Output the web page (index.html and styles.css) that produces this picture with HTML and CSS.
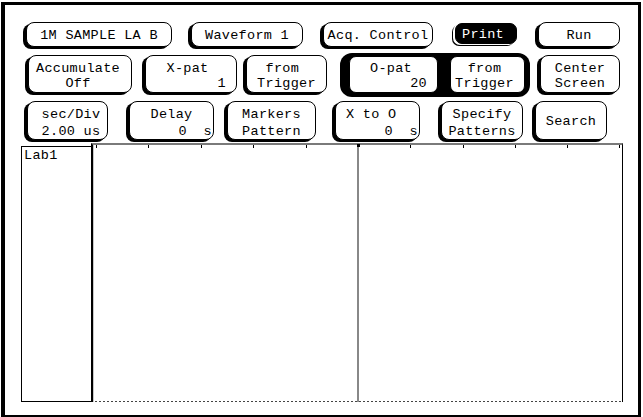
FILE: index.html
```html
<!DOCTYPE html>
<html>
<head>
<meta charset="utf-8">
<link rel="stylesheet" href="styles.css">
</head>
<body>
<div class="frame">
  <div class="row row1">
    <div class="btn b-sample"><span class="ln">1M SAMPLE LA B</span></div>
    <div class="btn b-wave"><span class="ln">Waveform 1</span></div>
    <div class="btn b-acq"><span class="ln">Acq. Control</span></div>
    <div class="btn b-print"><span class="ln">Print</span></div>
    <div class="btn b-run"><span class="ln">Run</span></div>
  </div>
  <div class="row row2">
    <div class="btn b-accum"><span class="ln">Accumulate</span><span class="ln">Off</span></div>
    <div class="btn b-xpat"><span class="ln">X-pat</span><span class="ln val val-x">1</span></div>
    <div class="btn b-from1"><span class="ln">from </span><span class="ln">Trigger</span></div>
    <div class="grp">
      <div class="btn b-opat"><span class="ln">O-pat</span><span class="ln val val-o">20</span></div>
      <div class="btn b-from2"><span class="ln">from</span><span class="ln">Trigger</span></div>
    </div>
    <div class="btn b-center"><span class="ln">Center</span><span class="ln">Screen</span></div>
  </div>
  <div class="row row3">
    <div class="btn b-sec"><span class="ln">sec/Div</span><span class="ln">2.00 us</span></div>
    <div class="btn b-delay"><span class="ln">Delay</span><span class="ln val val-s">0  s</span></div>
    <div class="btn b-markers"><span class="ln">Markers</span><span class="ln">Pattern</span></div>
    <div class="btn b-xo"><span class="ln left">X to O</span><span class="ln val val-s">0  s</span></div>
    <div class="btn b-specify"><span class="ln">Specify</span><span class="ln">Patterns</span></div>
    <div class="btn b-search"><span class="ln">Search</span></div>
  </div>
  <div class="graph">
    <div class="lab">Lab1</div>
    <div class="wave">
      <svg class="ticks" width="529" height="3" viewBox="0 0 529 3">
        <g stroke="#000" stroke-width="1">
          <line x1="3.5" y1="0" x2="3.5" y2="3"/>
          <line x1="55.5" y1="0" x2="55.5" y2="3"/>
          <line x1="108.5" y1="0" x2="108.5" y2="3"/>
          <line x1="160.5" y1="0" x2="160.5" y2="3"/>
          <line x1="213.5" y1="0" x2="213.5" y2="3"/>
          <line x1="317.5" y1="0" x2="317.5" y2="3"/>
          <line x1="370.5" y1="0" x2="370.5" y2="3"/>
          <line x1="422.5" y1="0" x2="422.5" y2="3"/>
          <line x1="474.5" y1="0" x2="474.5" y2="3"/>
          <line x1="526.5" y1="0" x2="526.5" y2="3"/>
        </g>
      </svg>
      <div class="marker"></div>
      <div class="dots"></div>
    </div>
  </div>
</div>
</body>
</html>
```
FILE: styles.css
```css
* { box-sizing: border-box; }
html, body { margin: 0; background: #fff; }
body {
  font-family: "Liberation Mono", "DejaVu Sans Mono", monospace;
  font-size: 13.5px;
  letter-spacing: 0.3px;
  color: #000;
}
.frame {
  margin: 2px 0 0 1px;
  width: 640px;
  height: 415px;
  border-style: solid;
  border-color: #000;
  border-width: 3px 3px 2px 4px;
}
.row { display: flex; align-items: flex-start; }
.btn {
  flex: none;
  display: flex;
  flex-direction: column;
  background: #fff;
  border: 1px solid #000;
  border-radius: 8px;
  box-shadow: -3px 2px 0 0 #000;
  line-height: 15px;
}
.ln { display: block; text-align: center; white-space: pre; }
.ln.left { text-align: left; }
.ln.val { text-align: right; }

/* row 1 */
.row1 { margin-top: 17px; height: 25px; }
.row1 .btn { height: 25px; padding-top: 5px; }
.b-sample { margin-left: 21px; width: 146px; }
.b-wave { margin-left: 19px; width: 112px; }
.b-acq { margin-left: 20px; width: 110px; }
.row1 .b-print {
  margin-left: 22px; margin-top: 1px; width: 62px; height: 21px;
  padding-top: 3px; padding-right: 6px;
  background: #000; color: #fff; border-radius: 7px;
  box-shadow: -2px 1px 0 0 #fff, -3px 2px 0 0 #000;
}
.b-run { margin-left: 21px; width: 82px; }

/* row 2 */
.row2 { margin-top: 6px; height: 44px; }
.row2 > .btn { margin-top: 2px; height: 38px; padding-top: 5px; }
.b-accum { margin-left: 23px; width: 104px; padding-right: 4px; }
.b-xpat { margin-left: 13px; width: 92px; padding-right: 7px; }
.val-x { padding-right: 3px; }
.b-from1 { margin-left: 9px; width: 81px; }
.grp {
  flex: none;
  display: flex;
  gap: 12px;
  margin-left: 13px;
  width: 190px;
  height: 44px;
  padding: 3px 5px 4px 9px;
  background: #000;
  border-radius: 12px;
}
.grp .btn { height: 37px; padding-top: 4px; box-shadow: none; border-radius: 7px; }
.b-opat { width: 89px; padding-right: 5px; }
.val-o { padding-right: 5px; }
.b-from2 { width: 75px; padding-right: 6px; }
.b-center { margin-left: 10px; width: 80px; }

/* row 3 */
.row3 { margin-top: 4px; height: 39px; }
.row3 .btn { height: 39px; padding-top: 4px; line-height: 17px; }
.b-sec { margin-left: 22px; width: 81px; padding-left: 7px; }
.b-delay { margin-left: 21px; width: 85px; }
.val-s { padding-right: 1px; }
.b-markers { margin-left: 13px; width: 89px; }
.b-xo { margin-left: 19px; width: 85px; }
.b-xo .left { padding-left: 10px; }
.b-specify { margin-left: 21px; width: 82px; }
.row3 .b-search { margin-left: 12px; width: 72px; padding-top: 11px; }

/* graph */
.graph { display: flex; align-items: flex-end; margin-top: 3px; }
.lab {
  margin-left: 16px;
  width: 70px;
  height: 256px;
  border: 1px solid #000;
  border-right: none;
  padding-left: 2px;
  padding-top: 1px;
  line-height: 15px;
}
.wave {
  position: relative;
  display: flex;
  flex-direction: column;
  width: 532px;
  height: 259px;
  border-top: 2px solid #7a7a7a;
  border-left: 2px solid #000;
  border-right: 1px solid #000;
  box-shadow: inset 1px 0 0 #c8c8c8;
}
.ticks { display: block; }
.marker {
  position: absolute;
  left: 264px;
  top: 0;
  bottom: 0;
  width: 2px;
  background: #888;
}
.marker::before {
  content: "";
  position: absolute;
  left: 0;
  top: -1px;
  width: 3px;
  height: 3px;
  background: #000;
}
.dots {
  margin-top: auto;
  margin-left: 2px;
  height: 1px;
  background: repeating-linear-gradient(90deg, #444 0 2px, transparent 2px 4px);
}
```
